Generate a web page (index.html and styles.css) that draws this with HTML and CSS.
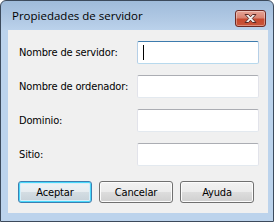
FILE: index.html
```html
<!DOCTYPE html>
<html>
<head>
<meta charset="utf-8">
<link rel="stylesheet" href="styles.css">
</head>
<body>
<div class="window">
  <div class="titlebar">
    <span class="title">Propiedades de servidor</span>
    <div class="close">
      <svg width="17" height="11" viewBox="0 0 17 11">
        <path d="M3 1.5 L6.5 1.5 L8.5 3.8 L10.5 1.5 L14 1.5 L10.3 5.5 L14 9.5 L10.5 9.5 L8.5 7.2 L6.5 9.5 L3 9.5 L6.7 5.5 Z" fill="#f4f4f4" stroke="#5a2a26" stroke-width="1" stroke-linejoin="round"/>
      </svg>
    </div>
  </div>
  <div class="content">
    <div class="form">
      <label class="label">Nombre de servidor:</label>
      <div class="input focused"><span class="caret"></span></div>
      <label class="label">Nombre de ordenador:</label>
      <div class="input"></div>
      <label class="label">Dominio:</label>
      <div class="input"></div>
      <label class="label">Sitio:</label>
      <div class="input"></div>
    </div>
    <div class="buttons">
      <div class="btn default">Aceptar</div>
      <div class="btn">Cancelar</div>
      <div class="btn">Ayuda</div>
    </div>
  </div>
</div>
</body>
</html>
```

FILE: styles.css
```css
html, body {
  margin: 0;
  padding: 0;
  background: #ffffff;
}
.window {
  box-sizing: border-box;
  width: 274px;
  height: 222px;
  border: 1px solid #3c4a5c;
  border-radius: 6px 6px 0 0;
  background: linear-gradient(to bottom, #9fbbda 0px, #b2cae5 20px, #bcd3ec 30px, #bcd3ec 100%);
  padding: 0 5px 8px 7px;
  display: flex;
  flex-direction: column;
}
.titlebar {
  height: 29px;
  display: flex;
  align-items: flex-start;
  justify-content: space-between;
}
.title {
  font-family: "Open Sans", sans-serif;
  font-size: 11.5px;
  color: #000;
  margin: 7px 0 0 4px;
  line-height: 16px;
}
.close {
  box-sizing: border-box;
  width: 31px;
  height: 17px;
  margin: 9px 2px 0 0;
  border: 1px solid #6e2a24;
  border-radius: 3px;
  background: linear-gradient(to bottom, #e6a496 0%, #d98472 45%, #c6492f 55%, #c9553a 100%);
  box-shadow: inset 0 0 0 1px rgba(255,255,255,0.35);
  display: flex;
  align-items: center;
  justify-content: center;
}
.content {
  flex: 1;
  background: #f0f0f0;
  padding: 11px 8px 0 11px;
  font-family: "DejaVu Sans Condensed", "DejaVu Sans", sans-serif;
  font-size: 11px;
  letter-spacing: -0.15px;
  color: #000;
}
.form {
  display: grid;
  grid-template-columns: 118px 122px;
  row-gap: 11px;
  align-items: center;
}
.label {
  line-height: 13px;
}
.input {
  box-sizing: border-box;
  height: 23px;
  background: #fff;
  border: 1px solid #e2e3ea;
  border-top-color: #abadb3;
  border-bottom-color: #e3e9ef;
  border-radius: 2px;
  position: relative;
}
.input.focused {
  border-color: #b5cfe7;
  border-top-color: #3d7bad;
  border-bottom-color: #b7d9ed;
}
.caret {
  position: absolute;
  left: 5px;
  top: 3px;
  width: 1px;
  height: 15px;
  background: #000;
}
.buttons {
  display: flex;
  gap: 7px;
  margin: 15px 0 0 -1px;
}
.btn {
  box-sizing: border-box;
  width: 74px;
  height: 22px;
  border: 1px solid #707070;
  border-radius: 3px;
  background: linear-gradient(to bottom, #f2f2f2 0%, #ebebeb 50%, #dddddd 51%, #cfcfcf 100%);
  box-shadow: inset 0 0 0 1px #fcfcfc;
  display: flex;
  align-items: center;
  justify-content: center;
  line-height: 13px;
}
.btn.default {
  border-color: #3c7fb1;
  box-shadow: inset 0 0 0 1px #48d8fb, inset 0 0 0 2px #d6eef9;
  background: linear-gradient(to bottom, #eef3f6 0%, #e6ecf0 50%, #d4dde3 51%, #c6d1d9 100%);
}
```
